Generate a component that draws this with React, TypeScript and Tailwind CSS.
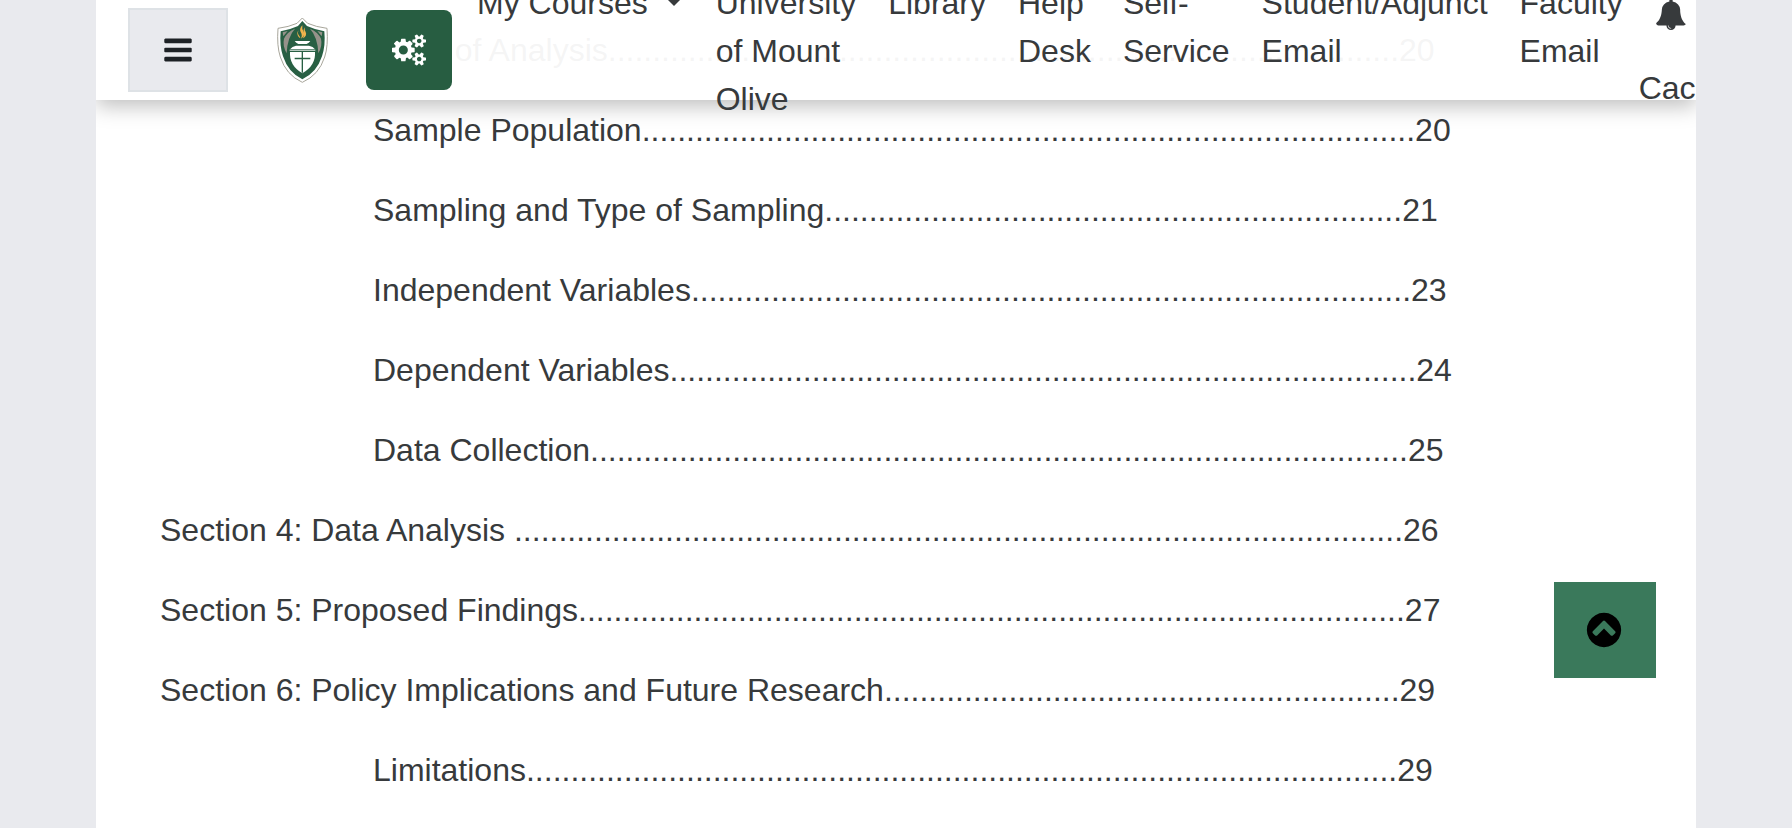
import type { ReactNode } from "react";

type Entry = { title: string; dots: number; page: number; nested?: boolean };

const entries: Entry[] = [
    { title: "Units of Analysis", dots: 89, page: 20, nested: true },
    { title: "Sample Population", dots: 87, page: 20, nested: true },
    { title: "Sampling and Type of Sampling", dots: 65, page: 21, nested: true },
    { title: "Independent Variables", dots: 81, page: 23, nested: true },
    { title: "Dependent Variables", dots: 84, page: 24, nested: true },
    { title: "Data Collection", dots: 92, page: 25, nested: true },
    { title: "Section 4: Data Analysis ", dots: 100, page: 26 },
    { title: "Section 5: Proposed Findings", dots: 93, page: 27 },
    { title: "Section 6: Policy Implications and Future Research", dots: 58, page: 29 },
    { title: "Limitations", dots: 98, page: 29, nested: true },
];

const navLinks = [
    "University of Mount Olive",
    "Library",
    "Help Desk",
    "Self-Service",
    "Student/Adjunct Email",
    "Faculty Email",
];

function Icon({ className, viewBox = "0 0 1792 1792", children }: { className: string; viewBox?: string; children: ReactNode }) {
    return (
        <svg className={className} viewBox={viewBox} fill="currentColor" aria-hidden="true">
            {children}
        </svg>
    );
}

function Logo() {
    return (
        <svg className="w-[51px] h-[66px]" viewBox="51 48 153 198" aria-hidden="true">
            {/* Shield */}
            <path
                d="M127 51L143 67Q168 78 201 82Q205 135 194 168Q177 222 127 244Q78 222 61 168Q50 135 54 82Q86 78 111 67Z"
                fill="#fff"
                stroke="#a8a69b"
                strokeWidth="3"
            />
            <path
                d="M127 60L141 75Q165 86 193 91Q197 133 186 166Q170 215 127 235Q85 215 69 166Q58 133 62 91Q90 86 114 75Z"
                fill="#285f43"
            />
            {/* Side bands */}
            <path d="M105 83Q82 108 80 157Q67 134 72 113Q82 92 105 83Z" fill="#96928a" />
            <path d="M150 83Q173 108 175 157Q188 134 183 113Q173 92 150 83Z" fill="#96928a" />
            <path d="M83 90L70 106L68 94Z M172 90L185 106L187 94Z" fill="#96928a" />
            {/* Flame */}
            <path d="M127 73Q117 84 122 93Q128 102 123 113Q137 103 131 92Q125 84 127 73Z" fill="#f2b34c" />
            <path d="M118 83Q111 94 116 102Q121 107 121 112Q109 103 113 92Z M134 79Q133 87 137 93Q142 104 129 112Q134 102 131 95Q129 87 134 79Z" fill="#f2b34c" />
            {/* Lamp */}
            <path d="M104 120H151Q147 126 140 129H115Q108 126 104 120Z" fill="#fff" />
            <path d="M108 134H147Q160 137 164 144H91Q96 137 108 134Z" fill="#fff" />
            <path d="M89 146H166V149H89Z" fill="#fff" />
            <path d="M90 153H165Q168 193 127 217Q87 193 90 153Z" fill="#fff" />
            <path d="M125 153H129V215H125Z M104 170H151V175H104Z" fill="#285f43" />
        </svg>
    );
}

function Header() {
    return (
        <header className="sticky top-0 z-10 h-[100px] flex items-center pl-8 bg-white/95 shadow-[0_6px_20px_rgba(0,0,0,0.26)]">
            <button
                type="button"
                aria-label="Side panel"
                className="shrink-0 w-[100px] h-[84px] flex items-center justify-center bg-[#e9eaee] border-2 border-[#dee2e6] text-[#1d2125]"
            >
                <Icon className="size-8">
                    <path d="M1664 1344v128q0 26-19 45t-45 19H192q-26 0-45-19t-19-45v-128q0-26 19-45t45-19h1408q26 0 45 19t19 45zm0-512v128q0 26-19 45t-45 19H192q-26 0-45-19t-19-45V832q0-26 19-45t45-19h1408q26 0 45 19t19 45zm0-512v128q0 26-19 45t-45 19H192q-26 0-45-19t-19-45V320q0-26 19-45t45-19h1408q26 0 45 19t19 45z" />
                </Icon>
            </button>

            <a href="#" aria-label="Home" className="shrink-0 ml-[49px]">
                <Logo />
            </a>

            <button
                type="button"
                aria-label="Settings"
                className="shrink-0 ml-[38px] w-[86px] h-20 flex items-center justify-center rounded-lg bg-[#275d41] text-white"
            >
                <Icon className="w-[34px] h-8" viewBox="0 0 1920 1792">
                    <path d="M896 896q0-106-75-181t-181-75-181 75-75 181 75 181 181 75 181-75 75-181zm768 512q0-52-38-90t-90-38-90 38-38 90q0 53 37.5 90.5t90.5 37.5 90.5-37.5 37.5-90.5zm0-1024q0-52-38-90t-90-38-90 38-38 90q0 53 37.5 90.5t90.5 37.5 90.5-37.5 37.5-90.5zm-384 421v185q0 10-7 19.5t-16 10.5l-155 24q-11 35-32 76 34 48 90 115 7 11 7 20 0 12-7 19-23 30-82.5 89.5t-78.5 59.5q-11 0-21-7l-115-90q-37 19-77 31-11 108-23 155-7 24-30 24h-186q-11 0-20-7.5t-10-17.5l-23-153q-34-10-75-31l-118 89q-7 7-20 7-11 0-21-8-144-133-144-160 0-9 7-19 10-14 41-53t47-61q-23-44-35-82l-152-24q-10-1-17-9.5t-7-19.5v-185q0-10 7-19.5t16-10.5l155-24q11-35 32-76-34-48-90-115-7-11-7-20 0-12 7-20 22-30 82-89t79-59q11 0 21 7l115 90q34-18 77-32 11-108 23-154 7-24 30-24h186q11 0 20 7.5t10 17.5l23 153q34 10 75 31l118-89q8-7 20-7 11 0 21 8 144 133 144 160 0 8-7 19-12 16-42 54t-45 60q23 48 34 82l152 23q10 2 17 10.5t7 19.5zm640 533v140q0 16-149 31-12 27-30 52 51 113 51 138 0 4-4 7-122 71-124 71-8 0-46-47t-52-68q-20 2-30 2t-30-2q-14 21-52 68t-46 47q-2 0-124-71-4-3-4-7 0-25 51-138-18-25-30-52-149-15-149-31v-140q0-16 149-31 13-29 30-52-51-113-51-138 0-4 4-7 4-2 35-20t59-34 30-16q8 0 46 46.5t52 67.5q20-2 30-2t30 2q51-71 92-112l6-2q4 0 124 70 4 3 4 7 0 25-51 138 17 23 30 52 149 15 149 31zm0-1024v140q0 16-149 31-12 27-30 52 51 113 51 138 0 4-4 7-122 71-124 71-8 0-46-47t-52-68q-20 2-30 2t-30-2q-14 21-52 68t-46 47q-2 0-124-71-4-3-4-7 0-25 51-138-18-25-30-52-149-15-149-31v-140q0-16 149-31 13-29 30-52-51-113-51-138 0-4 4-7 4-2 35-20t59-34 30-16q8 0 46 46.5t52 67.5q20-2 30-2t30 2q51-71 92-112l6-2q4 0 124 70 4 3 4 7 0 25-51 138 17 23 30 52 149 15 149 31z" />
                </Icon>
            </button>

            <nav className="shrink-0 ml-[25px] pt-0.5">
                <ul className="flex items-start gap-8">
                    <li>
                        <button type="button" className="flex items-center gap-4 whitespace-nowrap">
                            My Courses
                            <span className="mb-1 border-x-10 border-t-10 border-x-transparent border-t-[#373a3c]" />
                        </button>
                    </li>
                    {navLinks.map((label) => (
                        <li key={label} className="w-min">
                            <a href="#">{label}</a>
                        </li>
                    ))}
                </ul>
            </nav>

            {/* User area */}
            <div className="shrink-0 ml-4 pt-0.5 flex flex-col">
                <button type="button" aria-label="Notifications" className="px-4 pt-2 pb-[34px]">
                    <Icon className="size-8">
                        <path d="M912 1696q0-16-16-16-59 0-101.5-42.5T752 1536q0-16-16-16t-16 16q0 73 51.5 124.5T896 1712q16 0 16-16zm816-288q0 52-38 90t-90 38h-448q0 106-75 181t-181 75-181-75-75-181H192q-52 0-90-38t-38-90q50-42 91-88t85-119.5 74.5-158.5 50-206T384 640q0-152 117-282.5T808 199q-8-19-8-39 0-40 28-68t68-28 68 28 28 68q0 20-8 39 190 28 307 158.5T1408 640q0 139 19.5 258t50 206 74.5 158.5 85 119.5 91 88z" />
                    </Icon>
                </button>
                <a href="#">Cac</a>
            </div>
        </header>
    );
}

export default function App() {
    return (
        <div className="min-h-screen bg-[#e9eaee] px-24 text-[32px] leading-[48px] text-[#373a3c] font-['Liberation_Sans',Arial,sans-serif]">
            <div className="min-h-screen bg-white overflow-clip">
                <Header />

                <main className="-mt-[74px] px-16 pb-8">
                    <ul className="flex flex-col gap-8">
                        {entries.map((entry) => (
                            <li key={entry.title} className={`whitespace-pre ${entry.nested ? "pl-[213px]" : ""}`}>
                                {entry.title + ".".repeat(entry.dots) + entry.page}
                            </li>
                        ))}
                    </ul>
                </main>
            </div>

            {/* Back to top */}
            <button
                type="button"
                aria-label="Back to top"
                className="fixed right-[136px] bottom-[150px] w-[102px] h-24 pr-0.5 flex items-center justify-center bg-[#3a795b] text-black"
            >
                <Icon className="size-10">
                    <path d="M1293 1139l102-102q19-19 19-45t-19-45L941 493q-19-19-45-19t-45 19l-454 454q-19 19-19 45t19 45l102 102q19 19 45 19t45-19l307-307 307 307q19 19 45 19t45-19zm371-243q0 209-103 385.5T1281.5 1561 896 1664t-385.5-103T231 1281.5 128 896t103-385.5T510.5 231 896 128t385.5 103T1561 510.5 1664 896z" />
                </Icon>
            </button>
        </div>
    );
}
